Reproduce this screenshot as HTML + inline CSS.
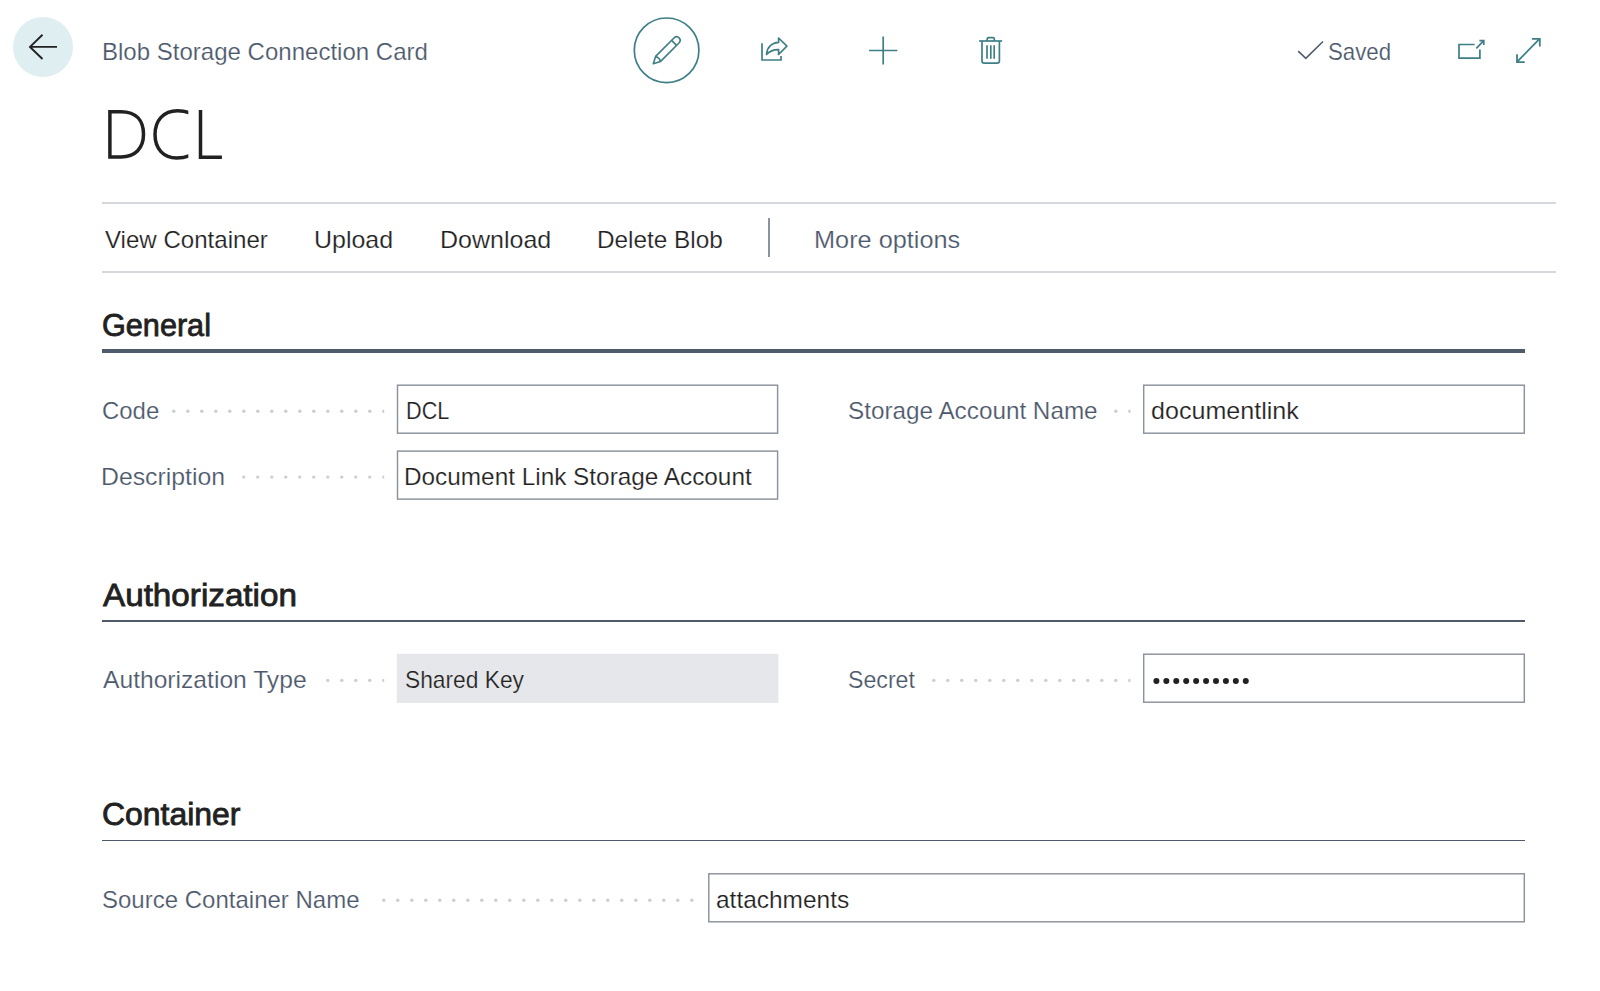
<!DOCTYPE html>
<html><head><meta charset="utf-8"><title>Blob Storage Connection Card</title>
<style>
html,body{margin:0;padding:0;background:#fff;}
body{width:1600px;height:991px;overflow:hidden;position:relative;font-family:"Liberation Sans",sans-serif;}
.t{position:absolute;white-space:nowrap;line-height:1;transform-origin:0 0;}
.ln{position:absolute;}
.ld{position:absolute;height:6px;background-size:14px 6px;background-repeat:repeat-x;}
.bx{position:absolute;box-sizing:border-box;border:1.4px solid #8e95a0;background:#fff;}
.bx.ro{border:none;background:#e6e7ea;}
svg{position:absolute;left:0;top:0;}
</style></head><body>
<div style="position:absolute;left:12.8px;top:17px;width:60px;height:60px;border-radius:50%;background:#dfeef0"></div>
<!-- lines -->
<div class="ln" style="left:102px;top:202.1px;width:1454px;height:2px;background:#d5d8dd"></div>
<div class="ln" style="left:102px;top:270.7px;width:1454px;height:2px;background:#d5d8dd"></div>
<div class="ln" style="left:768.1px;top:217.7px;width:1.6px;height:39.8px;background:#8a93a0"></div>
<div class="ln" style="left:102px;top:349.2px;width:1423px;height:3.8px;background:#4f5a6b"></div>
<div class="ln" style="left:102px;top:619.9px;width:1423px;height:1.9px;background:#4f5969"></div>
<div class="ln" style="left:102px;top:839.6px;width:1423px;height:1.9px;background:#4f5969"></div>
<!-- boxes -->
<svg width="1600" height="991" viewBox="0 0 1600 991" fill="none" style="position:absolute;left:0;top:0">
 <rect x="396.8" y="653.8" width="381.5" height="49.1" fill="#e6e7ea"/>
 <g stroke="#8b929d" stroke-width="1.45" fill="none">
  <rect x="397.5" y="385.2" width="380.1" height="48"/>
  <rect x="397.5" y="451.1" width="380.1" height="48"/>
  <rect x="1143.7" y="385.2" width="380.6" height="48"/>
  <rect x="1143.7" y="654.2" width="380.6" height="48"/>
  <rect x="708.8" y="873.8" width="815.5" height="48"/>
 </g>
</svg>
<!-- leaders -->
<svg width="1600" height="991" viewBox="0 0 1600 991" style="position:absolute;left:0;top:0"><g fill="#cbced5">
<clipPath id="ld172_411"><rect x="170" y="407.20" width="214.20" height="8"/></clipPath><g clip-path="url(#ld172_411)"><circle cx="173.80" cy="411.20" r="1.7"/><circle cx="187.80" cy="411.20" r="1.7"/><circle cx="201.80" cy="411.20" r="1.7"/><circle cx="215.80" cy="411.20" r="1.7"/><circle cx="229.80" cy="411.20" r="1.7"/><circle cx="243.80" cy="411.20" r="1.7"/><circle cx="257.80" cy="411.20" r="1.7"/><circle cx="271.80" cy="411.20" r="1.7"/><circle cx="285.80" cy="411.20" r="1.7"/><circle cx="299.80" cy="411.20" r="1.7"/><circle cx="313.80" cy="411.20" r="1.7"/><circle cx="327.80" cy="411.20" r="1.7"/><circle cx="341.80" cy="411.20" r="1.7"/><circle cx="355.80" cy="411.20" r="1.7"/><circle cx="369.80" cy="411.20" r="1.7"/><circle cx="383.80" cy="411.20" r="1.7"/></g>
<clipPath id="ld242_477"><rect x="240" y="473.10" width="144.20" height="8"/></clipPath><g clip-path="url(#ld242_477)"><circle cx="243.80" cy="477.10" r="1.7"/><circle cx="257.80" cy="477.10" r="1.7"/><circle cx="271.80" cy="477.10" r="1.7"/><circle cx="285.80" cy="477.10" r="1.7"/><circle cx="299.80" cy="477.10" r="1.7"/><circle cx="313.80" cy="477.10" r="1.7"/><circle cx="327.80" cy="477.10" r="1.7"/><circle cx="341.80" cy="477.10" r="1.7"/><circle cx="355.80" cy="477.10" r="1.7"/><circle cx="369.80" cy="477.10" r="1.7"/><circle cx="383.80" cy="477.10" r="1.7"/></g>
<clipPath id="ld1114_411"><rect x="1112" y="407.20" width="18.50" height="8"/></clipPath><g clip-path="url(#ld1114_411)"><circle cx="1115.80" cy="411.20" r="1.7"/><circle cx="1129.80" cy="411.20" r="1.7"/></g>
<clipPath id="ld326_680"><rect x="324" y="676.40" width="60.20" height="8"/></clipPath><g clip-path="url(#ld326_680)"><circle cx="327.80" cy="680.40" r="1.7"/><circle cx="341.80" cy="680.40" r="1.7"/><circle cx="355.80" cy="680.40" r="1.7"/><circle cx="369.80" cy="680.40" r="1.7"/><circle cx="383.80" cy="680.40" r="1.7"/></g>
<clipPath id="ld932_680"><rect x="930" y="676.40" width="200.50" height="8"/></clipPath><g clip-path="url(#ld932_680)"><circle cx="933.80" cy="680.40" r="1.7"/><circle cx="947.80" cy="680.40" r="1.7"/><circle cx="961.80" cy="680.40" r="1.7"/><circle cx="975.80" cy="680.40" r="1.7"/><circle cx="989.80" cy="680.40" r="1.7"/><circle cx="1003.80" cy="680.40" r="1.7"/><circle cx="1017.80" cy="680.40" r="1.7"/><circle cx="1031.80" cy="680.40" r="1.7"/><circle cx="1045.80" cy="680.40" r="1.7"/><circle cx="1059.80" cy="680.40" r="1.7"/><circle cx="1073.80" cy="680.40" r="1.7"/><circle cx="1087.80" cy="680.40" r="1.7"/><circle cx="1101.80" cy="680.40" r="1.7"/><circle cx="1115.80" cy="680.40" r="1.7"/><circle cx="1129.80" cy="680.40" r="1.7"/></g>
<clipPath id="ld382_900"><rect x="380" y="896.20" width="315.50" height="8"/></clipPath><g clip-path="url(#ld382_900)"><circle cx="383.80" cy="900.20" r="1.7"/><circle cx="397.80" cy="900.20" r="1.7"/><circle cx="411.80" cy="900.20" r="1.7"/><circle cx="425.80" cy="900.20" r="1.7"/><circle cx="439.80" cy="900.20" r="1.7"/><circle cx="453.80" cy="900.20" r="1.7"/><circle cx="467.80" cy="900.20" r="1.7"/><circle cx="481.80" cy="900.20" r="1.7"/><circle cx="495.80" cy="900.20" r="1.7"/><circle cx="509.80" cy="900.20" r="1.7"/><circle cx="523.80" cy="900.20" r="1.7"/><circle cx="537.80" cy="900.20" r="1.7"/><circle cx="551.80" cy="900.20" r="1.7"/><circle cx="565.80" cy="900.20" r="1.7"/><circle cx="579.80" cy="900.20" r="1.7"/><circle cx="593.80" cy="900.20" r="1.7"/><circle cx="607.80" cy="900.20" r="1.7"/><circle cx="621.80" cy="900.20" r="1.7"/><circle cx="635.80" cy="900.20" r="1.7"/><circle cx="649.80" cy="900.20" r="1.7"/><circle cx="663.80" cy="900.20" r="1.7"/><circle cx="677.80" cy="900.20" r="1.7"/><circle cx="691.80" cy="900.20" r="1.7"/></g>
</g></svg>
<span class="t" style="left:101.90px;top:39.70px;font-weight:400;font-size:24px;color:#4b576a;-webkit-text-stroke:0.2px #fff;transform:scaleX(1.0012)">Blob Storage Connection Card</span>
<span class="t" style="left:1327.87px;top:39.70px;font-weight:400;font-size:24px;color:#4b576a;-webkit-text-stroke:0.2px #fff;transform:scaleX(0.9273)">Saved</span>
<span class="t" style="left:104.60px;top:227.90px;font-weight:400;font-size:24px;color:#212121;-webkit-text-stroke:0.2px #fff;transform:scaleX(1.0031)">View Container</span>
<span class="t" style="left:313.62px;top:227.90px;font-weight:400;font-size:24px;color:#212121;-webkit-text-stroke:0.2px #fff;transform:scaleX(1.0397)">Upload</span>
<span class="t" style="left:439.52px;top:227.90px;font-weight:400;font-size:24px;color:#212121;-webkit-text-stroke:0.2px #fff;transform:scaleX(1.0417)">Download</span>
<span class="t" style="left:596.97px;top:227.90px;font-weight:400;font-size:24px;color:#212121;-webkit-text-stroke:0.2px #fff;transform:scaleX(1.0132)">Delete Blob</span>
<span class="t" style="left:814.39px;top:228.10px;font-weight:400;font-size:24px;color:#4b576a;-webkit-text-stroke:0.2px #fff;transform:scaleX(1.0537)">More options</span>
<span class="t" style="left:102.31px;top:309.50px;font-weight:400;font-size:31px;color:#212121;-webkit-text-stroke:0.8px #212121;transform:scaleX(0.9880)">General</span>
<span class="t" style="left:102.90px;top:579.70px;font-weight:400;font-size:31px;color:#212121;-webkit-text-stroke:0.8px #212121;transform:scaleX(1.0717)">Authorization</span>
<span class="t" style="left:102.47px;top:799.30px;font-weight:400;font-size:31px;color:#212121;-webkit-text-stroke:0.8px #212121;transform:scaleX(1.0301)">Container</span>
<span class="t" style="left:102.10px;top:399.10px;font-weight:400;font-size:24px;color:#4b576a;-webkit-text-stroke:0.2px #fff;transform:scaleX(0.9982)">Code</span>
<span class="t" style="left:101.33px;top:465.00px;font-weight:400;font-size:24px;color:#4b576a;-webkit-text-stroke:0.2px #fff;transform:scaleX(1.0333)">Description</span>
<span class="t" style="left:848.49px;top:399.10px;font-weight:400;font-size:24px;color:#4b576a;-webkit-text-stroke:0.2px #fff;transform:scaleX(1.0114)">Storage Account Name</span>
<span class="t" style="left:102.90px;top:668.10px;font-weight:400;font-size:24px;color:#4b576a;-webkit-text-stroke:0.2px #fff;transform:scaleX(1.0264)">Authorization Type</span>
<span class="t" style="left:848.44px;top:668.10px;font-weight:400;font-size:24px;color:#4b576a;-webkit-text-stroke:0.2px #fff;transform:scaleX(0.9647)">Secret</span>
<span class="t" style="left:102.00px;top:887.60px;font-weight:400;font-size:24px;color:#4b576a;-webkit-text-stroke:0.2px #fff;transform:scaleX(1.0004)">Source Container Name</span>
<span class="t" style="left:405.60px;top:399.10px;font-weight:400;font-size:24px;color:#212121;-webkit-text-stroke:0.2px #fff;transform:scaleX(0.9022)">DCL</span>
<span class="t" style="left:404.47px;top:464.70px;font-weight:400;font-size:24px;color:#212121;-webkit-text-stroke:0.2px #fff;transform:scaleX(1.0141)">Document Link Storage Account</span>
<span class="t" style="left:1151.15px;top:399.00px;font-weight:400;font-size:24px;color:#212121;-webkit-text-stroke:0.2px #fff;transform:scaleX(1.0450)">documentlink</span>
<span class="t" style="left:405.15px;top:668.20px;font-weight:400;font-size:24px;color:#212121;-webkit-text-stroke:0.2px #fff;transform:scaleX(0.9488)">Shared Key</span>
<span class="t" style="left:715.88px;top:887.90px;font-weight:400;font-size:24px;color:#212121;-webkit-text-stroke:0.2px #fff;transform:scaleX(1.0186)">attachments</span>
<svg width="1600" height="991" viewBox="0 0 1600 991" fill="none">
 <!-- back arrow -->
 <path d="M57 46.9 H30 M42.5 34.8 L30 46.9 L42.5 59" stroke="#212121" stroke-width="1.9" stroke-linecap="butt" stroke-linejoin="miter"/>
 <!-- DCL -->
 <g stroke="#212121" stroke-width="3.5" fill="none">
  <path d="M109.9 156.9 V111.8 H121 C136.5 111.8 143.5 121 143.5 134.3 C143.5 148 135.5 156.9 121 156.9 Z"/>
  <clipPath id="cc"><rect x="140" y="100" width="48.3" height="70"/></clipPath><path clip-path="url(#cc)" d="M192 114 C187 111.5 182 110.8 177.5 110.8 C163.5 110.8 155 120.5 155 134.6 C155 148.8 163.5 158 176.8 158 C182.5 158 187.5 157 192 154.6"/>
  <path d="M200.5 110 V157.2 H221.9"/>
 </g>
 <!-- edit circle -->
 <circle cx="666.6" cy="50.3" r="32.3" stroke="#3e7f86" stroke-width="1.7"/>
 <g stroke="#3e7f86" stroke-width="1.6" stroke-linejoin="round">
  <path d="M653.3 63.7 L655.6 56.4 L674.2 37.8 A3.54 3.54 0 0 1 679.2 42.8 L660.6 61.4 Z"/>
  <path d="M671.6 40.4 L676.6 45.4"/>
  <path d="M655.6 56.4 Q659.5 57.5 660.6 61.4"/>
 </g>
 <!-- share -->
 <g stroke="#3e7f86" stroke-width="1.7">
  <path d="M762 43.2 V60 H781 V56"/>
  <path d="M778.6 38.0 L786.9 46.2 L778.6 54.5 L778.6 49.6 C773 49.4 769.5 51.4 766.6 54.4 C767 48 771 42.8 778.6 42.4 Z" stroke-linejoin="round"/>
 </g>
 <!-- plus -->
 <path d="M883.2 36.4 V64.6 M869.1 50.5 H897.3" stroke="#3e7f86" stroke-width="1.7"/>
 <!-- trash -->
 <g stroke="#3e7f86" stroke-width="1.7">
  <path d="M979.1 41 H1002.1"/>
  <path d="M987.2 41 V39 Q987.2 37.7 988.5 37.7 H993 Q994.3 37.7 994.3 39 V41"/>
  <path d="M982 41 V61 Q982 63.2 984.2 63.2 H997.2 Q999.4 63.2 999.4 61 V41"/>
  <path d="M987 45.2 V58.8 M990.8 45.2 V58.8 M994.2 45.2 V58.8"/>
 </g>
 <!-- check -->
 <path d="M1298.2 51.1 L1305.8 58.4 L1323 41.5" stroke="#505c6d" stroke-width="1.6"/>
 <!-- open in new -->
 <g stroke="#3e7f86" stroke-width="1.7">
  <path d="M1474.6 44.5 H1459 V58.2 H1479.9 V49.4"/>
  <path d="M1476.3 48.4 L1483.3 41.1 M1479.4 40.6 H1483.8 V44.9"/>
 </g>
 <!-- expand -->
 <g stroke="#3e7f86" stroke-width="1.8">
  <path d="M1517.3 61.6 L1539.3 39.2"/>
  <path d="M1531.9 38.8 H1539.8 V46.6"/>
  <path d="M1517 54.2 V62.1 H1524.7"/>
 </g>
 <!-- secret dots -->
 <g fill="#212121"><circle cx="1156.40" cy="681" r="3"/><circle cx="1166.33" cy="681" r="3"/><circle cx="1176.26" cy="681" r="3"/><circle cx="1186.19" cy="681" r="3"/><circle cx="1196.12" cy="681" r="3"/><circle cx="1206.05" cy="681" r="3"/><circle cx="1215.98" cy="681" r="3"/><circle cx="1225.91" cy="681" r="3"/><circle cx="1235.84" cy="681" r="3"/><circle cx="1245.77" cy="681" r="3"/></g>
</svg>
</body></html>
